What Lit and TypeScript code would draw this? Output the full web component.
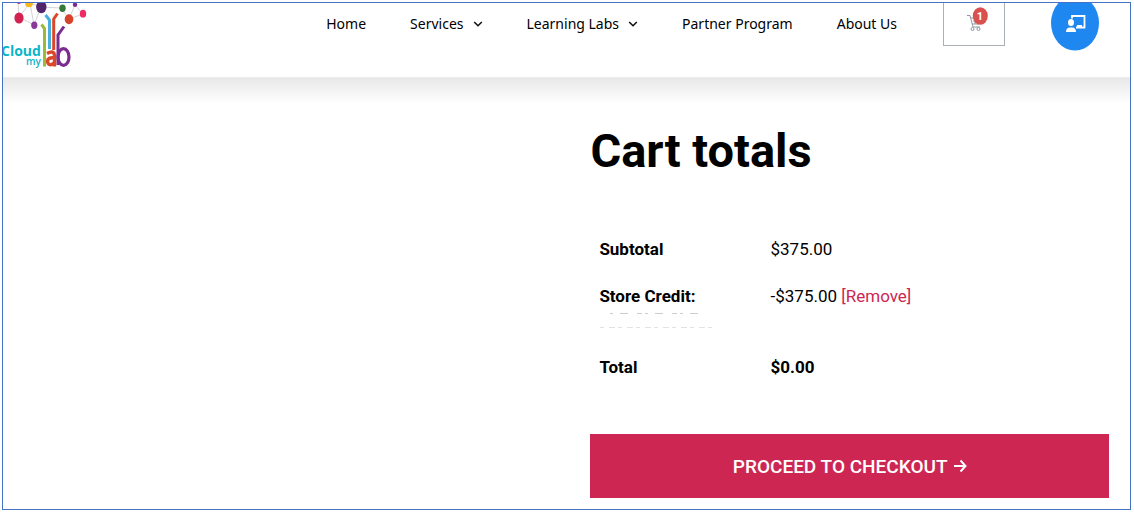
import { LitElement, html, css, svg } from "lit";
import { customElement } from "lit/decorators.js";

const chevron = svg`<svg class="chevron" viewBox="0 0 10 6" aria-hidden="true"><path d="M1.2 1 L5 4.7 L8.8 1" fill="none" stroke="#111" stroke-width="1.6"/></svg>`;

@customElement("app-root")
export class AppRoot extends LitElement {
  static styles = css`
    :host { display: block; box-sizing: border-box; min-height: 100vh; padding: 2px 3px 3px 2px; background: #fff; color: #000; font-family: Roboto, sans-serif; }
    * { box-sizing: border-box; }
    a { color: inherit; text-decoration: none; }
    .frame { border: 1px solid #4472c4; min-height: calc(100vh - 5px); overflow: hidden; }
    .header { display: flex; align-items: flex-start; height: 75px; padding-right: 31px; border-bottom: 1px solid #ececec; }
    .logo { display: block; width: 85px; height: 67px; margin-right: auto; }
    .logo svg { display: block; width: 85px; height: 67px; }
    .nav { display: flex; gap: 44px; margin-top: 10px; font-family: "Noto Sans", sans-serif; font-size: 14px; line-height: 22px; white-space: nowrap; }
    .nav a { display: flex; align-items: center; gap: 9px; }
    .chevron { width: 10px; height: 6px; }
    .cart { display: block; width: 62px; height: 43px; margin-left: 46px; border: 1px solid #abb0b4; border-top: 0; }
    .cart svg { display: block; width: 60px; height: 42px; }
    .badge { font: 700 11px Roboto, sans-serif; }
    .training { display: block; width: 48px; height: 48px; margin-left: 46px; padding: 0; border: 0; background: none; }
    .training svg { display: block; width: 48px; height: 48px; }
    .page { background: linear-gradient(#e8e8e8, #fff 26px); padding: 45px 21px 11px; }
    .totals { width: 47.8%; margin-left: auto; }
    h1 { margin: 0; font-size: 47px; line-height: 56px; font-weight: 700; }
    table { width: 100%; margin-top: 47px; border-collapse: collapse; font-size: 17px; line-height: 23px; table-layout: fixed; }
    th { width: 33%; text-align: left; padding: 12px 9px; vertical-align: top; font-weight: 700; }
    td { padding: 12px 9px; vertical-align: top; }
    .total { font-weight: 700; }
    .remove { color: #cd2653; }
    .note { display: block; width: 120px; height: 24px; }
    .checkout { display: block; width: 100%; height: 64px; margin-top: 43px; border: 0; background: #cd2653; color: #fff; font: 500 19px Roboto, sans-serif; }
    .checkout span { display: inline-flex; align-items: center; gap: 6px; }
    .arrow { width: 13px; height: 14px; }
  `;

  render() {
    return html`
      <div class="frame">
        <header class="header">
          <a class="logo" href="#" aria-label="CloudMyLab">
            <svg viewBox="3 3 85 67">
              <path d="M19 17 L30 3 L41 7 L61 8 L69 19 L75 5 L83 14 L69 19 M30 3 L34 25 L41 7 M19 17 L34 25 M19 17 L18 3" fill="none" stroke="#d4d4d8" stroke-width="1"/>
              <ellipse cx="19" cy="18" rx="4.6" ry="5.6" fill="#d22350"/>
              <ellipse cx="34.300" cy="25.300" rx="3.100" ry="3.700" fill="#893a99"/>
              <ellipse cx="41.300" cy="7" rx="5.200" ry="6.200" fill="#53256b"/>
              <circle cx="29" cy="3.500" r="3.800" fill="#f9b71b"/>
              <circle cx="19" cy="2" r="2" fill="#d22390"/>
              <ellipse cx="62.500" cy="8.300" rx="3.200" ry="3.700" fill="#357a38"/>
              <ellipse cx="69" cy="19.300" rx="4.300" ry="5" fill="#d6432a"/>
              <circle cx="75" cy="4.800" r="2.200" fill="#7c2a8d"/>
              <ellipse cx="83" cy="13.700" rx="3.200" ry="3.900" fill="#ee2a63"/>
              <g fill="none" stroke-width="3">
                <path d="M41.500 24.500 L44.500 28.500 V66.500" stroke="#9abb37"/>
                <path d="M45.500 15 L49.500 20 V49" stroke="#47b0e0"/>
                <path d="M57.500 13.500 L53.700 19 V50" stroke="#d9482a"/>
                <path d="M64 26.500 L58 35 V65" stroke="#7c2b8f"/>
              </g>
              <g font-family="Open Sans, sans-serif">
                <text x="1" y="56" font-size="14" font-weight="700" fill="#0cb5c9">Cloud</text>
                <text x="26" y="65" font-size="10" font-weight="600" fill="#0cb5c9">my</text>
              </g>
              <path d="M47 53.500 Q54.500 49.500 54.500 56 V66.500 M54.500 58 Q47.500 57 47.500 61.500 Q48.500 67 54.500 63" fill="none" stroke="#d9482a" stroke-width="3.400"/>
              <ellipse cx="63.500" cy="57" rx="5.500" ry="8.300" fill="none" stroke="#7c2b8f" stroke-width="3.200"/>
            </svg>
          </a>
          <nav class="nav">
            <a href="#">Home</a>
            <a href="#">Services ${chevron}</a>
            <a href="#">Learning Labs ${chevron}</a>
            <a href="#">Partner Program</a>
            <a href="#">About Us</a>
          </nav>
          <a class="cart" href="#" aria-label="Cart">
            <svg viewBox="944 3 60 42">
              <g fill="none" stroke="#92989d" stroke-width="1">
                <path d="M967 15.500 H970 L973 27 H980 M971 18 H981 L979 24 H972 M973 21 H980 M975 18 V24 M978 18 V24"/>
                <circle cx="972.500" cy="29" r="1.500"/><circle cx="978.500" cy="29" r="1.500"/>
              </g>
              <ellipse cx="980.300" cy="16" rx="7.500" ry="8.700" fill="#d9504e"/>
              <text class="badge" x="980" y="20" text-anchor="middle" fill="#fff">1</text>
            </svg>
          </a>
          <button class="training" aria-label="Training">
            <svg viewBox="1051 3 48 48">
              <ellipse cx="1075" cy="23" rx="24" ry="27.500" fill="#1e87f0"/>
              <path d="M1072 18.500 V16 H1084.500 V27.500 H1076" fill="none" stroke="#fff" stroke-width="1.800"/>
              <path d="M1077 28 V25 H1082 V28 Z" fill="#fff"/>
              <ellipse cx="1071" cy="22.500" rx="3" ry="3.600" fill="#fff"/>
              <path d="M1066 32 Q1066 27.500 1070 27.500 H1072 Q1076 27.500 1076 32 Z" fill="#fff"/>
            </svg>
          </button>
        </header>
        <main class="page">
          <section class="totals">
            <h1>Cart totals</h1>
            <table>
              <tr><th scope="row">Subtotal</th><td>$375.00</td></tr>
              <tr>
                <th scope="row">Store Credit:
                  <svg class="note" viewBox="0 0 120 24" aria-hidden="true">
                    <g fill="none" stroke-width="1">
                      <path d="M11 5.500 H104" stroke="#ccc" stroke-dasharray="3 7 8 9 5 3"/>
                      <path d="M1 19.500 H116" stroke="#e2e2e2" stroke-dasharray="4 5 6 3"/>
                    </g>
                  </svg>
                </th>
                <td>-$375.00 <a class="remove" href="#">[Remove]</a></td>
              </tr>
              <tr><th scope="row">Total</th><td class="total">$0.00</td></tr>
            </table>
            <button class="checkout"><span>PROCEED TO CHECKOUT
              <svg class="arrow" viewBox="0 0 13 14" aria-hidden="true"><path d="M0 7 H11.500 M6.500 1.500 L11.500 7 L6.500 12.500" fill="none" stroke="#fff" stroke-width="2"/></svg></span>
            </button>
          </section>
        </main>
      </div>`;
  }
}
